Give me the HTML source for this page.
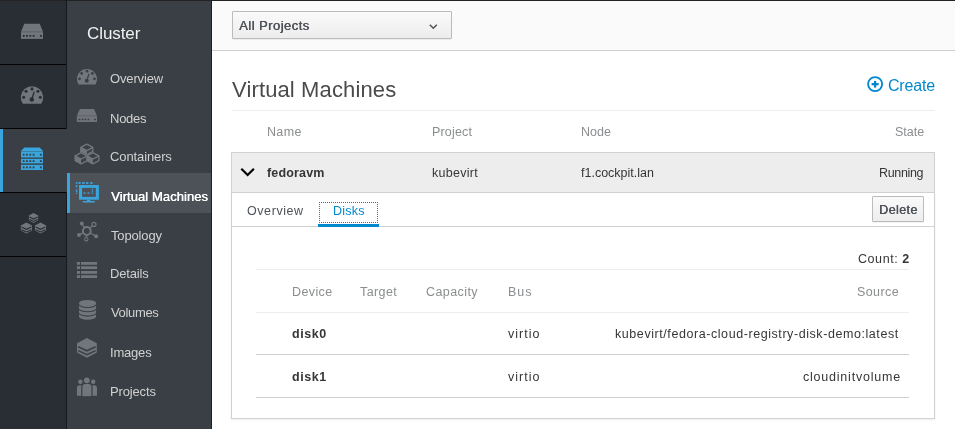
<!DOCTYPE html>
<html><head><meta charset="utf-8"><style>
html,body{margin:0;padding:0;}
body{width:955px;height:429px;overflow:hidden;position:relative;background:#fff;font-family:"Liberation Sans",sans-serif;}
.b{position:absolute;}
.t{font-family:"Liberation Sans",sans-serif;will-change:transform;}
.t b{font-weight:700;}
</style></head><body>
<!-- left icon column -->
<div class="b" style="left:0;top:0;width:66px;height:429px;background:#292e34;"></div>
<div class="b" style="left:0;top:0;width:955px;height:1px;background:#222222;"></div>
<div class="b" style="left:0;top:64px;width:67px;height:1px;background:#030303;"></div>
<div class="b" style="left:0;top:128px;width:67px;height:1px;background:#030303;"></div>
<div class="b" style="left:0;top:129px;width:66px;height:63px;background:#393f44;"></div>
<div class="b" style="left:0;top:129px;width:3px;height:63px;background:#39a5dc;"></div>
<div class="b" style="left:0;top:192px;width:67px;height:1px;background:#030303;"></div>
<div class="b" style="left:0;top:256px;width:67px;height:1px;background:#030303;"></div>
<div class="b" style="left:66px;top:0;width:1px;height:129px;background:#16191c;"></div>
<div class="b" style="left:66px;top:192px;width:1px;height:237px;background:#16191c;"></div>
<div class="b" style="left:66px;top:129px;width:1px;height:63px;background:#393f44;"></div>
<!-- secondary sidebar -->
<div class="b" style="left:67px;top:1px;width:145px;height:428px;background:#393f44;"></div>
<div class="b" style="left:67px;top:173px;width:145px;height:40px;background:#4d5258;"></div>
<div class="b" style="left:67px;top:173px;width:3px;height:40px;background:#39a5dc;"></div>
<div class="b" style="left:211px;top:0;width:1px;height:429px;background:#1d2125;"></div>
<!-- header -->
<div class="b" style="left:212px;top:1px;width:743px;height:49px;background:#fafafa;"></div>
<div class="b" style="left:212px;top:50px;width:743px;height:1px;background:#d1d1d1;"></div>
<div class="b" style="left:232px;top:11px;width:218px;height:26px;border:1px solid #bbbbbb;border-radius:1px;background:linear-gradient(#fafafa,#ededed);box-shadow:0 1px 1px rgba(3,3,3,0.06);"></div>
<!-- title border -->
<div class="b" style="left:232px;top:110px;width:703px;height:1px;background:#ededed;"></div>
<!-- row -->
<div class="b" style="left:231px;top:152px;width:702px;height:39px;border:1px solid #d1d1d1;background:#ededed;"></div>
<!-- expanded box -->
<div class="b" style="left:231px;top:193px;width:702px;height:225px;border:1px solid #d1d1d1;border-top:none;background:#fff;box-shadow:0 1px 2px rgba(3,3,3,0.08);"></div>
<div class="b" style="left:232px;top:226px;width:702px;height:1px;background:#d1d1d1;"></div>
<div class="b" style="left:319px;top:202px;width:57px;height:19px;border:1px dotted #0088ce;"></div>
<div class="b" style="left:318px;top:224px;width:61px;height:3px;background:#0088ce;"></div>
<div class="b" style="left:872px;top:196px;width:50px;height:24px;border:1px solid #bbbbbb;border-radius:1px;background:linear-gradient(#fafafa,#ededed);box-shadow:0 1px 1px rgba(3,3,3,0.06);"></div>
<!-- disks table lines -->
<div class="b" style="left:256px;top:269px;width:653px;height:1px;background:#ededed;"></div>
<div class="b" style="left:256px;top:312px;width:653px;height:1px;background:#ededed;"></div>
<div class="b" style="left:256px;top:354px;width:653px;height:1px;background:#d1d1d1;"></div>
<div class="b" style="left:256px;top:397px;width:653px;height:1px;background:#d1d1d1;"></div>
<svg class="b" style="left:0;top:0" width="955" height="429" viewBox="0 0 955 429">
<polygon points="24.30,23.70 39.70,23.70 43.00,31.65 21.00,31.65" fill="#72767b"/><rect x="21.00" y="31.65" width="22.00" height="7.05" fill="#72767b" opacity="0.85"/><rect x="21.00" y="32.70" width="22.00" height="6.00" fill="#72767b"/><rect x="22.76" y="34.98" width="1.87" height="1.80" fill="#292e34"/><rect x="26.06" y="34.98" width="1.87" height="1.80" fill="#292e34"/><rect x="29.36" y="34.98" width="1.87" height="1.80" fill="#292e34"/><rect x="32.66" y="34.98" width="1.87" height="1.80" fill="#292e34"/><rect x="39.92" y="34.98" width="1.87" height="1.80" fill="#292e34"/><path d="M22.74,103.80 A11.2,11.2 0 1 1 41.26,103.80 Z" fill="#72767b"/><circle cx="32.00" cy="88.88" r="1.51" fill="#292e34"/><circle cx="26.06" cy="91.34" r="1.51" fill="#292e34"/><circle cx="37.94" cy="91.34" r="1.51" fill="#292e34"/><circle cx="23.71" cy="97.28" r="1.51" fill="#292e34"/><circle cx="40.29" cy="97.28" r="1.51" fill="#292e34"/><line x1="31.78" y1="99.52" x2="34.02" y2="92.24" stroke="#292e34" stroke-width="1.34" stroke-linecap="round"/><circle cx="31.78" cy="99.52" r="2.24" fill="#292e34"/><polygon points="24.30,147.40 39.70,147.40 43.00,150.90 21.00,150.90" fill="#39a5dc"/><rect x="21" y="150.9" width="22" height="1" fill="#39a5dc" opacity="0.7"/><rect x="21" y="151.90" width="22" height="5.6" fill="#39a5dc"/><rect x="22.76" y="153.80" width="1.8" height="1.8" fill="#393f44"/><rect x="26.06" y="153.80" width="1.8" height="1.8" fill="#393f44"/><rect x="29.36" y="153.80" width="1.8" height="1.8" fill="#393f44"/><rect x="32.66" y="153.80" width="1.8" height="1.8" fill="#393f44"/><rect x="39.92" y="153.80" width="1.8" height="1.8" fill="#393f44"/><rect x="21" y="158.80" width="22" height="4.6" fill="#39a5dc"/><rect x="22.76" y="160.20" width="1.8" height="1.8" fill="#393f44"/><rect x="26.06" y="160.20" width="1.8" height="1.8" fill="#393f44"/><rect x="29.36" y="160.20" width="1.8" height="1.8" fill="#393f44"/><rect x="32.66" y="160.20" width="1.8" height="1.8" fill="#393f44"/><rect x="39.92" y="160.20" width="1.8" height="1.8" fill="#393f44"/><rect x="21" y="164.80" width="22" height="5.2" fill="#39a5dc"/><rect x="22.76" y="166.50" width="1.8" height="1.8" fill="#393f44"/><rect x="26.06" y="166.50" width="1.8" height="1.8" fill="#393f44"/><rect x="29.36" y="166.50" width="1.8" height="1.8" fill="#393f44"/><rect x="32.66" y="166.50" width="1.8" height="1.8" fill="#393f44"/><rect x="39.92" y="166.50" width="1.8" height="1.8" fill="#393f44"/><polygon points="33.55,212.90 38.20,215.60 38.20,220.20 33.55,222.90 28.90,220.20 28.90,215.60" fill="#72767b"/><polyline points="29.46,217.10 33.55,219.10 37.64,217.10" fill="none" stroke="#292e34" stroke-width="1.1"/><polyline points="29.46,219.50 33.55,221.50 37.64,219.50" fill="none" stroke="#292e34" stroke-width="1.1"/><polygon points="26.40,222.40 32.00,225.40 32.00,230.50 26.40,233.50 20.80,230.50 20.80,225.40" fill="#72767b"/><polyline points="21.47,227.06 26.40,229.28 31.33,227.06" fill="none" stroke="#292e34" stroke-width="1.1"/><polyline points="21.47,229.73 26.40,231.95 31.33,229.73" fill="none" stroke="#292e34" stroke-width="1.1"/><polygon points="40.50,222.40 46.10,225.40 46.10,230.50 40.50,233.50 34.90,230.50 34.90,225.40" fill="#72767b"/><polyline points="35.57,227.06 40.50,229.28 45.43,227.06" fill="none" stroke="#292e34" stroke-width="1.1"/><polyline points="35.57,229.73 40.50,231.95 45.43,229.73" fill="none" stroke="#292e34" stroke-width="1.1"/><path d="M78.53,84.50 A10.1,10.1 0 1 1 95.47,84.50 Z" fill="#72767b"/><circle cx="87.00" cy="71.22" r="1.36" fill="#393f44"/><circle cx="81.65" cy="73.44" r="1.36" fill="#393f44"/><circle cx="92.35" cy="73.44" r="1.36" fill="#393f44"/><circle cx="79.53" cy="78.80" r="1.36" fill="#393f44"/><circle cx="94.47" cy="78.80" r="1.36" fill="#393f44"/><line x1="86.80" y1="80.82" x2="88.82" y2="74.25" stroke="#393f44" stroke-width="1.21" stroke-linecap="round"/><circle cx="86.80" cy="80.82" r="2.02" fill="#393f44"/><polygon points="79.92,108.90 93.99,108.90 97.00,115.79 76.90,115.79" fill="#72767b"/><rect x="76.90" y="115.79" width="20.10" height="6.11" fill="#72767b" opacity="0.85"/><rect x="76.90" y="116.70" width="20.10" height="5.20" fill="#72767b"/><rect x="78.51" y="118.68" width="1.71" height="1.56" fill="#393f44"/><rect x="81.52" y="118.68" width="1.71" height="1.56" fill="#393f44"/><rect x="84.54" y="118.68" width="1.71" height="1.56" fill="#393f44"/><rect x="87.55" y="118.68" width="1.71" height="1.56" fill="#393f44"/><rect x="94.19" y="118.68" width="1.71" height="1.56" fill="#393f44"/><polygon points="86.80,144.20 92.80,147.44 92.80,151.46 86.80,154.70 80.80,151.46 80.80,147.44" fill="#393f44" stroke="#393f44" stroke-width="1.2"/><polygon points="80.80,147.44 86.80,150.68 86.80,154.70 80.80,151.46" fill="#72767b"/><polygon points="86.80,144.20 92.80,147.44 92.80,151.46 86.80,154.70 80.80,151.46 80.80,147.44" fill="none" stroke="#72767b" stroke-width="1.35" stroke-linejoin="round"/><polyline points="80.80,147.44 86.80,150.68 92.80,147.44" fill="none" stroke="#72767b" stroke-width="1.35"/><polygon points="81.10,152.60 87.10,155.84 87.10,160.56 81.10,163.80 75.10,160.56 75.10,155.84" fill="#393f44" stroke="#393f44" stroke-width="1.2"/><polygon points="75.10,155.84 81.10,159.08 81.10,163.80 75.10,160.56" fill="#72767b"/><polygon points="81.10,152.60 87.10,155.84 87.10,160.56 81.10,163.80 75.10,160.56 75.10,155.84" fill="none" stroke="#72767b" stroke-width="1.35" stroke-linejoin="round"/><polyline points="75.10,155.84 81.10,159.08 87.10,155.84" fill="none" stroke="#72767b" stroke-width="1.35"/><polygon points="92.90,152.60 98.90,155.84 98.90,160.56 92.90,163.80 86.90,160.56 86.90,155.84" fill="#393f44" stroke="#393f44" stroke-width="1.2"/><polygon points="86.90,155.84 92.90,159.08 92.90,163.80 86.90,160.56" fill="#72767b"/><polygon points="92.90,152.60 98.90,155.84 98.90,160.56 92.90,163.80 86.90,160.56 86.90,155.84" fill="none" stroke="#72767b" stroke-width="1.35" stroke-linejoin="round"/><polyline points="86.90,155.84 92.90,159.08 98.90,155.84" fill="none" stroke="#72767b" stroke-width="1.35"/><rect x="75.8" y="182.1" width="1.50" height="1.8" fill="#39a5dc"/><rect x="78.3" y="182.1" width="2.40" height="1.8" fill="#39a5dc"/><rect x="82.1" y="182.1" width="2.50" height="1.8" fill="#39a5dc"/><rect x="86" y="182.1" width="2.40" height="1.8" fill="#39a5dc"/><rect x="90.2" y="182.1" width="2.40" height="1.8" fill="#39a5dc"/><rect x="75.8" y="185" width="1.5" height="2.40" fill="#39a5dc"/><rect x="75.8" y="189.5" width="1.5" height="2.40" fill="#39a5dc"/><rect x="75.8" y="192.6" width="1.5" height="1.2" fill="#39a5dc"/><rect x="79" y="185" width="19.9" height="14.7" fill="#39a5dc"/><rect x="82.1" y="187.9" width="13.7" height="9" fill="#4d5258"/><rect x="83.5" y="192.4" width="2.10" height="1.3" fill="#39a5dc"/><rect x="87.4" y="192.4" width="2.10" height="1.3" fill="#39a5dc"/><rect x="91.7" y="192.4" width="1.3" height="1.3" fill="#39a5dc"/><rect x="91.8" y="188.8" width="1.2" height="1.4" fill="#39a5dc"/><rect x="91.8" y="190.6" width="1.2" height="1.3" fill="#39a5dc"/><rect x="87" y="199.7" width="3.2" height="1.5" fill="#39a5dc"/><rect x="82.8" y="201" width="11.9" height="1.5" fill="#39a5dc"/><g stroke="#72767b" fill="none"><line x1="86.8" y1="231" x2="81.8" y2="223.6" stroke-width="1.2"/><line x1="86.8" y1="231" x2="79" y2="234.9" stroke-width="1.2"/><line x1="86.8" y1="231" x2="96.1" y2="236.3" stroke-width="1.2"/><line x1="86.8" y1="231" x2="94" y2="224.4" stroke-width="1.2"/><line x1="86.8" y1="231" x2="86.3" y2="239" stroke-width="1.2"/><circle cx="86.8" cy="231" r="3.9" stroke-width="2" fill="#393f44"/><circle cx="94" cy="224.4" r="2" stroke-width="1.2" fill="#393f44"/><circle cx="86.3" cy="239.2" r="1.7" stroke-width="1.1" fill="#393f44"/></g><circle cx="81.8" cy="223.6" r="2" fill="#72767b"/><circle cx="79" cy="234.9" r="2" fill="#72767b"/><circle cx="96.1" cy="236.3" r="2" fill="#72767b"/><rect x="76.9" y="262" width="3.1" height="2.8" fill="#72767b"/><rect x="81" y="262" width="16.1" height="2.8" fill="#72767b"/><rect x="76.9" y="266.3" width="3.1" height="2.8" fill="#72767b"/><rect x="81" y="266.3" width="16.1" height="2.8" fill="#72767b"/><rect x="76.9" y="271" width="3.1" height="2.8" fill="#72767b"/><rect x="81" y="271" width="16.1" height="2.8" fill="#72767b"/><rect x="76.9" y="275.2" width="3.1" height="2.8" fill="#72767b"/><rect x="81" y="275.2" width="16.1" height="2.8" fill="#72767b"/><path d="M79,303.2 A8.55,3.3 0 0 1 96.1,303.2 V316.4 A8.55,3.3 0 0 1 79,316.4 Z" fill="#72767b"/><path d="M78.6,304.1 A8.95,3.4 0 0 0 96.5,304.1" fill="none" stroke="#393f44" stroke-width="1.1"/><path d="M78.6,308.4 A8.95,3.4 0 0 0 96.5,308.4" fill="none" stroke="#393f44" stroke-width="1.1"/><path d="M78.6,312.7 A8.95,3.4 0 0 0 96.5,312.7" fill="none" stroke="#393f44" stroke-width="1.1"/><polygon points="86.90,337.90 96.80,343.27 96.80,352.43 86.90,357.80 77.00,352.43 77.00,343.27" fill="#72767b"/><polyline points="78.19,346.85 86.90,350.83 95.61,346.85" fill="none" stroke="#393f44" stroke-width="1.6"/><polyline points="78.19,350.64 86.90,354.62 95.61,350.64" fill="none" stroke="#393f44" stroke-width="1.6"/><circle cx="80.4" cy="381.8" r="2.2" fill="#72767b"/><circle cx="93.2" cy="381.8" r="2.2" fill="#72767b"/><path d="M76.9,395.8 v-7.5 a3,3 0 0 1 3,-3 h2.2 l1,0 v10.5 z" fill="#72767b"/><path d="M97,395.8 v-7.5 a3,3 0 0 0 -3,-3 h-2.2 l-1,0 v10.5 z" fill="#72767b"/><path d="M81.8,396.8 v-9.8 a3.5,3.5 0 0 1 3.5,-3.5 h3.2 a3.5,3.5 0 0 1 3.5,3.5 v9.8 z" fill="#72767b" stroke="#393f44" stroke-width="1.2"/><circle cx="86.8" cy="380.3" r="2.9" fill="#72767b"/><polyline points="429.8,24.8 433.3,28.2 436.8,24.8" fill="none" stroke="#4d5258" stroke-width="1.5"/><polyline points="241.3,168.7 247.6,175 253.9,168.7" fill="none" stroke="#030303" stroke-width="2.2"/><circle cx="875.1" cy="84.1" r="7.05" fill="none" stroke="#0088ce" stroke-width="1.8"/><rect x="871.6" y="83" width="7" height="2.3" fill="#0088ce"/><rect x="873.95" y="80.9" width="2.3" height="6.7" fill="#0088ce"/>
</svg>
<div id="cluster" class="t" style="position:absolute;top:24.11px;height:20px;line-height:20px;font-size:17px;font-weight:400;color:#f0f0f0;white-space:nowrap;letter-spacing:-0.085px;left:86.50px;">Cluster</div>
<div id="s_over" class="t" style="position:absolute;top:68.90px;height:20px;line-height:20px;font-size:13px;font-weight:400;color:#d1d1d1;white-space:nowrap;letter-spacing:-0.144px;left:110.00px;">Overview</div>
<div id="s_nodes" class="t" style="position:absolute;top:108.50px;height:20px;line-height:20px;font-size:13px;font-weight:400;color:#d1d1d1;white-space:nowrap;letter-spacing:-0.250px;left:110.00px;">Nodes</div>
<div id="s_cont" class="t" style="position:absolute;top:147.00px;height:20px;line-height:20px;font-size:13px;font-weight:400;color:#d1d1d1;white-space:nowrap;letter-spacing:-0.111px;left:110.00px;">Containers</div>
<div id="s_vm" class="t" style="position:absolute;top:186.70px;height:20px;line-height:20px;font-size:13px;font-weight:400;text-shadow:0.45px 0 0 #ffffff;color:#ffffff;white-space:nowrap;letter-spacing:0.066px;left:111.00px;">Virtual Machines</div>
<div id="s_topo" class="t" style="position:absolute;top:225.70px;height:20px;line-height:20px;font-size:13px;font-weight:400;color:#d1d1d1;white-space:nowrap;letter-spacing:-0.145px;left:111.00px;">Topology</div>
<div id="s_det" class="t" style="position:absolute;top:264.00px;height:20px;line-height:20px;font-size:13px;font-weight:400;color:#d1d1d1;white-space:nowrap;letter-spacing:-0.165px;left:110.00px;">Details</div>
<div id="s_vol" class="t" style="position:absolute;top:303.20px;height:20px;line-height:20px;font-size:13px;font-weight:400;color:#d1d1d1;white-space:nowrap;letter-spacing:-0.333px;left:111.00px;">Volumes</div>
<div id="s_img" class="t" style="position:absolute;top:342.80px;height:20px;line-height:20px;font-size:13px;font-weight:400;color:#d1d1d1;white-space:nowrap;letter-spacing:-0.200px;left:110.00px;">Images</div>
<div id="s_proj" class="t" style="position:absolute;top:381.70px;height:20px;line-height:20px;font-size:13px;font-weight:400;color:#d1d1d1;white-space:nowrap;letter-spacing:-0.145px;left:110.00px;">Projects</div>
<div id="allproj" class="t" style="position:absolute;top:15.50px;height:20px;line-height:20px;font-size:13px;font-weight:400;text-shadow:0.45px 0 0 #4d5258;color:#4d5258;white-space:nowrap;letter-spacing:0.457px;left:239.00px;">All Projects</div>
<div id="title" class="t" style="position:absolute;top:79.68px;height:20px;line-height:20px;font-size:22px;font-weight:400;color:#4a4a4a;white-space:nowrap;letter-spacing:0.131px;left:232.00px;">Virtual Machines</div>
<div id="create" class="t" style="position:absolute;top:76.16px;height:20px;line-height:20px;font-size:16px;font-weight:400;color:#0088ce;white-space:nowrap;letter-spacing:-0.200px;right:20.00px;margin-right:0.200px;">Create</div>
<div id="h_name" class="t" style="position:absolute;top:121.87px;height:20px;line-height:20px;font-size:12.5px;font-weight:400;color:#8b8d8f;white-space:nowrap;letter-spacing:0.335px;left:266.50px;">Name</div>
<div id="h_proj" class="t" style="position:absolute;top:121.87px;height:20px;line-height:20px;font-size:12.5px;font-weight:400;color:#8b8d8f;white-space:nowrap;letter-spacing:0.168px;left:432.00px;">Project</div>
<div id="h_node" class="t" style="position:absolute;top:121.87px;height:20px;line-height:20px;font-size:12.5px;font-weight:400;color:#8b8d8f;white-space:nowrap;letter-spacing:-0.002px;left:580.50px;">Node</div>
<div id="h_state" class="t" style="position:absolute;top:121.87px;height:20px;line-height:20px;font-size:12.5px;font-weight:400;color:#8b8d8f;white-space:nowrap;right:30.50px;">State</div>
<div id="r_name" class="t" style="position:absolute;top:162.67px;height:20px;line-height:20px;font-size:12.5px;font-weight:700;color:#363636;white-space:nowrap;letter-spacing:0.171px;left:267.30px;">fedoravm</div>
<div id="r_proj" class="t" style="position:absolute;top:162.67px;height:20px;line-height:20px;font-size:12.5px;font-weight:400;color:#363636;white-space:nowrap;letter-spacing:0.286px;left:432.00px;">kubevirt</div>
<div id="r_node" class="t" style="position:absolute;top:162.67px;height:20px;line-height:20px;font-size:12.5px;font-weight:400;color:#363636;white-space:nowrap;letter-spacing:-0.002px;left:580.50px;">f1.cockpit.lan</div>
<div id="r_state" class="t" style="position:absolute;top:162.67px;height:20px;line-height:20px;font-size:12.5px;font-weight:400;color:#363636;white-space:nowrap;letter-spacing:-0.335px;right:31.50px;margin-right:0.335px;">Running</div>
<div id="t_over" class="t" style="position:absolute;top:200.67px;height:20px;line-height:20px;font-size:12.5px;font-weight:400;color:#4d5258;white-space:nowrap;letter-spacing:0.573px;left:247.00px;">Overview</div>
<div id="t_disks" class="t" style="position:absolute;top:200.67px;height:20px;line-height:20px;font-size:12.5px;font-weight:400;color:#0088ce;white-space:nowrap;letter-spacing:0.250px;left:333.00px;">Disks</div>
<div id="delete" class="t" style="position:absolute;top:199.67px;height:20px;line-height:20px;font-size:12.5px;font-weight:400;text-shadow:0.45px 0 0 #4d5258;color:#4d5258;white-space:nowrap;letter-spacing:0.400px;left:879.00px;">Delete</div>
<div id="count" class="t" style="position:absolute;top:248.67px;height:20px;line-height:20px;font-size:12.5px;font-weight:400;color:#363636;white-space:nowrap;letter-spacing:0.571px;right:45.50px;margin-right:-0.571px;">Count: <b>2</b></div>
<div id="d_dev" class="t" style="position:absolute;top:282.17px;height:20px;line-height:20px;font-size:12.5px;font-weight:400;color:#8b8d8f;white-space:nowrap;letter-spacing:0.400px;left:291.50px;">Device</div>
<div id="d_tgt" class="t" style="position:absolute;top:282.17px;height:20px;line-height:20px;font-size:12.5px;font-weight:400;color:#8b8d8f;white-space:nowrap;letter-spacing:0.400px;left:360.00px;">Target</div>
<div id="d_cap" class="t" style="position:absolute;top:282.17px;height:20px;line-height:20px;font-size:12.5px;font-weight:400;color:#8b8d8f;white-space:nowrap;letter-spacing:0.426px;left:425.50px;">Capacity</div>
<div id="d_bus" class="t" style="position:absolute;top:282.17px;height:20px;line-height:20px;font-size:12.5px;font-weight:400;color:#8b8d8f;white-space:nowrap;letter-spacing:1.000px;left:507.50px;">Bus</div>
<div id="d_src" class="t" style="position:absolute;top:282.17px;height:20px;line-height:20px;font-size:12.5px;font-weight:400;color:#8b8d8f;white-space:nowrap;letter-spacing:0.400px;right:56.00px;margin-right:-0.400px;">Source</div>
<div id="d0" class="t" style="position:absolute;top:323.87px;height:20px;line-height:20px;font-size:12.5px;font-weight:700;color:#363636;white-space:nowrap;letter-spacing:0.550px;left:291.50px;">disk0</div>
<div id="d0bus" class="t" style="position:absolute;top:323.87px;height:20px;line-height:20px;font-size:12.5px;font-weight:400;color:#363636;white-space:nowrap;letter-spacing:1.000px;left:507.50px;">virtio</div>
<div id="d0src" class="t" style="position:absolute;top:323.87px;height:20px;line-height:20px;font-size:12.5px;font-weight:400;color:#363636;white-space:nowrap;letter-spacing:0.569px;right:57.00px;margin-right:-0.569px;">kubevirt/fedora-cloud-registry-disk-demo:latest</div>
<div id="d1" class="t" style="position:absolute;top:366.67px;height:20px;line-height:20px;font-size:12.5px;font-weight:700;color:#363636;white-space:nowrap;letter-spacing:0.550px;left:291.50px;">disk1</div>
<div id="d1bus" class="t" style="position:absolute;top:366.67px;height:20px;line-height:20px;font-size:12.5px;font-weight:400;color:#363636;white-space:nowrap;letter-spacing:1.000px;left:507.50px;">virtio</div>
<div id="d1src" class="t" style="position:absolute;top:366.67px;height:20px;line-height:20px;font-size:12.5px;font-weight:400;color:#363636;white-space:nowrap;letter-spacing:0.784px;right:55.00px;margin-right:-0.784px;">cloudinitvolume</div>
</body></html>
